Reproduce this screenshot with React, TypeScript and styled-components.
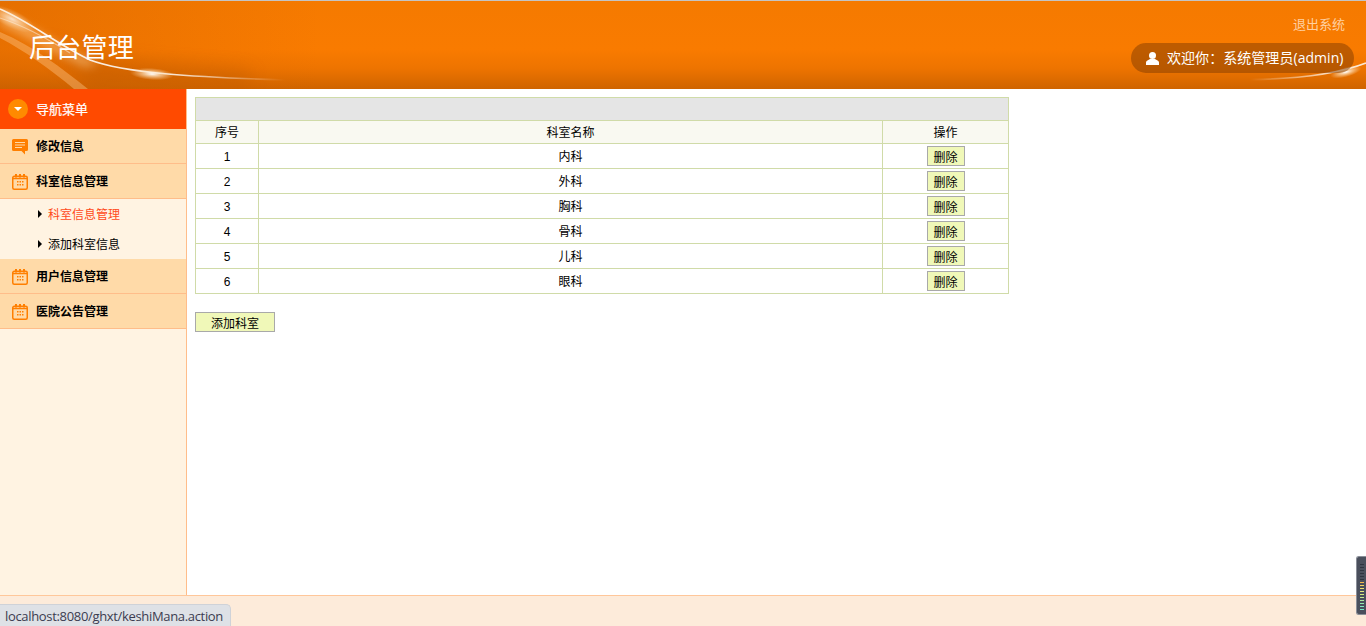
import styled, { createGlobalStyle } from "styled-components";
import { ReactNode } from "react";

const departments = ["内科", "外科", "胸科", "骨科", "儿科", "眼科"];

const widgetColors = ["#2f3440", "#2f3440", "#2f3440", "#2f3440", "#2f3440", "#2f3440", "#f5b850", "#f5d060", "#eee070", "#e6ea80", "#d6ea80", "#c6ea90", "#aee8a0", "#96e8b0", "#86e8c0", "#76e8c8"];

const GlobalStyle = createGlobalStyle`
    html, body {
        margin: 0;
        padding: 0;
        height: 100%;
        overflow: hidden;
        background: #fff;
        font-family: "Liberation Sans", "Noto Sans CJK SC", sans-serif;
        font-size: 12px;
    }
    #root {
        height: 100%;
    }
`;

function HeaderSwoosh() {
    return (
        <SwooshSvg viewBox="0 0 1366 88">
            <defs>
                <radialGradient id="glow">
                    <stop offset="0" stopColor="#fff" stopOpacity="1" />
                    <stop offset="0.45" stopColor="#ffe6c4" stopOpacity="0.6" />
                    <stop offset="1" stopColor="#ffd9a8" stopOpacity="0" />
                </radialGradient>
                <linearGradient id="streak" x1="0" x2="1" y1="0" y2="0">
                    <stop offset="0" stopColor="#fff" stopOpacity="0.9" />
                    <stop offset="0.6" stopColor="#fff" stopOpacity="0.85" />
                    <stop offset="1" stopColor="#fff" stopOpacity="0" />
                </linearGradient>
                <linearGradient id="rightStreak" x1="0" x2="1" y1="0" y2="0">
                    <stop offset="0" stopColor="#fff" stopOpacity="0" />
                    <stop offset="0.8" stopColor="#fff" stopOpacity="0.9" />
                    <stop offset="1" stopColor="#fff" stopOpacity="0.8" />
                </linearGradient>
                <linearGradient id="leftShade" x1="0" x2="1" y1="0" y2="0">
                    <stop offset="0" stopColor="#c85c00" stopOpacity="0.35" />
                    <stop offset="1" stopColor="#c85c00" stopOpacity="0" />
                </linearGradient>
                <filter id="soft" x="-20%" y="-50%" width="140%" height="200%">
                    <feGaussianBlur stdDeviation="5" />
                </filter>
                <filter id="softer" x="-20%" y="-50%" width="140%" height="200%">
                    <feGaussianBlur stdDeviation="0.6" />
                </filter>
                <filter id="shade" x="-30%" y="-80%" width="160%" height="260%">
                    <feGaussianBlur stdDeviation="9" />
                </filter>
            </defs>
            <rect x="0" y="0" width="320" height="88" fill="url(#leftShade)" />
            <path d="M40 40 C90 60 150 62 250 70 L250 84 L90 84 Z" fill="#b85600" opacity="0.4" filter="url(#shade)" />
            <path d="M0 12 C40 28 60 48 100 62 L85 66 C50 50 25 34 0 24 Z" fill="#ffd6a0" opacity="0.5" filter="url(#soft)" />
            <path d="M0 31 C35 46 60 66 88 88 L74 88 C50 68 25 50 0 37 Z" fill="#ffc88a" opacity="0.4" filter="url(#softer)" />
            <path d="M0 8 C32 22 55 42 90 59 C125 72 190 76 285 79" fill="none" stroke="url(#streak)" strokeWidth="1.6" filter="url(#softer)" />
            <path d="M0 17 C25 25 45 36 70 52" fill="none" stroke="#fff" strokeOpacity="0.45" strokeWidth="1.2" filter="url(#softer)" />
            <ellipse cx="12" cy="18" rx="26" ry="9" fill="url(#glow)" opacity="0.75" transform="rotate(26 12 18)" />
            <ellipse cx="152" cy="73" rx="22" ry="6" fill="url(#glow)" transform="rotate(4 152 73)" />
            <path d="M1250 78.5 C1295 78 1335 74 1366 62" fill="none" stroke="url(#rightStreak)" strokeWidth="1.8" filter="url(#softer)" />
            <ellipse cx="1346" cy="71" rx="16" ry="5" fill="url(#glow)" transform="rotate(-15 1346 71)" />
        </SwooshSvg>
    );
}

function CommentIcon() {
    return (
        <MenuIconSvg viewBox="0 0 16 16">
            <path d="M0 1.5 A1.5 1.5 0 0 1 1.5 0 H14.5 A1.5 1.5 0 0 1 16 1.5 V10.5 A1.5 1.5 0 0 1 14.5 12 H13 V15.5 L9.5 12 H1.5 A1.5 1.5 0 0 1 0 10.5 Z" fill="#ff7f00" />
            <path d="M3 3.5 H13 M3 6 H13 M3 8.5 H10" stroke="#ffdaa8" strokeWidth="1" />
        </MenuIconSvg>
    );
}

function CalendarIcon() {
    return (
        <MenuIconSvg viewBox="0 0 16 16">
            <rect x="0.75" y="2.25" width="14.5" height="13" rx="1.5" fill="none" stroke="#ff7f00" strokeWidth="1.5" />
            <rect x="3" y="0" width="2" height="3.5" fill="#ff7f00" />
            <rect x="7" y="0" width="2" height="3.5" fill="#ff7f00" />
            <rect x="11" y="0" width="2" height="3.5" fill="#ff7f00" />
            <path d="M1 4.5 H15" stroke="#ff7f00" strokeWidth="1.5" />
            <path d="M5 7 h1.5 v1.5 h-1.5 z M7.5 7 h1.5 v1.5 h-1.5 z M10 7 h1.5 v1.5 h-1.5 z M5 10 h1.5 v1.5 h-1.5 z M7.5 10 h1.5 v1.5 h-1.5 z M10 10 h1.5 v1.5 h-1.5 z" fill="#ff7f00" />
        </MenuIconSvg>
    );
}

function UserIcon() {
    return (
        <svg width="13" height="13" viewBox="0 0 13 13">
            <circle cx="6.5" cy="3.5" r="3.5" fill="#fff" />
            <path d="M0 13 V10.5 C0 8.5 2.5 8 4 7 H9 C10.5 8 13 8.5 13 10.5 V13 Z" fill="#fff" />
        </svg>
    );
}

function MenuGroup(props: { icon: ReactNode; label: string }) {
    return (
        <GroupRow>
            {props.icon}
            <GroupLabel>{props.label}</GroupLabel>
        </GroupRow>
    );
}

function App() {
    return (
        <>
            <GlobalStyle />
            <Page>
                <Header>
                    <HeaderSwoosh />
                    <Title>后台管理</Title>
                    <HeaderRight>
                        <Logout>退出系统</Logout>
                        <WelcomePill>
                            <UserIcon />
                            <WelcomeText>欢迎你：系统管理员(admin)</WelcomeText>
                        </WelcomePill>
                    </HeaderRight>
                </Header>
                <Body>
                    <Sidebar>
                        <NavTitle>
                            <NavBullet />
                            <NavTitleText>导航菜单</NavTitleText>
                        </NavTitle>
                        <MenuGroup icon={<CommentIcon />} label="修改信息" />
                        <MenuGroup icon={<CalendarIcon />} label="科室信息管理" />
                        <SubMenu>
                            <SubItem $active>科室信息管理</SubItem>
                            <SubItem>添加科室信息</SubItem>
                        </SubMenu>
                        <MenuGroup icon={<CalendarIcon />} label="用户信息管理" />
                        <MenuGroup icon={<CalendarIcon />} label="医院公告管理" />
                    </Sidebar>
                    <Content>
                        <DataTable>
                            <colgroup>
                                <col width="63" />
                                <col width="624" />
                                <col width="126" />
                            </colgroup>
                            <tbody>
                                <CaptionRow>
                                    <td colSpan={3}></td>
                                </CaptionRow>
                                <HeadRow>
                                    <td>序号</td>
                                    <td>科室名称</td>
                                    <td>操作</td>
                                </HeadRow>
                                {departments.map((name, i) => (
                                    <DataRow key={name}>
                                        <td>{i + 1}</td>
                                        <td>{name}</td>
                                        <td>
                                            <DeleteButton>删除</DeleteButton>
                                        </td>
                                    </DataRow>
                                ))}
                            </tbody>
                        </DataTable>
                        <AddButton>添加科室</AddButton>
                    </Content>
                </Body>
                <Footer />
                <StatusTip>localhost:8080/ghxt/keshiMana.action</StatusTip>
                <SideWidget>
                    {widgetColors.map((c, i) => (
                        <WidgetBar key={i} $color={c} />
                    ))}
                </SideWidget>
            </Page>
        </>
    );
}

const Page = styled.div`
    height: 626px;
    display: flex;
    flex-direction: column;
    position: relative;
    overflow: hidden;
`;

const Header = styled.div`
    height: 88px;
    flex: none;
    border-top: 1px solid #c4c4c4;
    position: relative;
    display: flex;
    justify-content: space-between;
    background: linear-gradient(180deg, #f57a00 0%, #f97b00 55%, #ee7400 76%, #cf6400 100%);
`;

const SwooshSvg = styled.svg`
    position: absolute;
    left: 0;
    top: 0;
    width: 100%;
    height: 100%;
`;

const Title = styled.div`
    position: relative;
    margin: 27px 0 0 29px;
    font-size: 26px;
    letter-spacing: 0.25px;
    line-height: 36px;
    color: #fff;
    font-family: "Noto Sans CJK SC", sans-serif;
`;

const HeaderRight = styled.div`
    position: relative;
    display: flex;
    flex-direction: column;
    align-items: flex-end;
    padding-right: 12px;
`;

const Logout = styled.div`
    margin: 13px 9px 0 0;
    font-size: 13px;
    line-height: 20px;
    color: #ffd0a0;
    font-family: "Noto Sans CJK SC", sans-serif;
`;

const WelcomePill = styled.div`
    margin-top: 9px;
    height: 30px;
    width: 223px;
    box-sizing: border-box;
    padding-left: 15px;
    border-radius: 15px;
    background: rgba(130, 60, 0, 0.5);
    display: flex;
    align-items: center;
    gap: 8px;
    color: #fff;
    font-size: 14px;
    font-family: "Open Sans", "Noto Sans CJK SC", sans-serif;
    white-space: nowrap;
`;

const WelcomeText = styled.span`
    margin-bottom: 2px;
    letter-spacing: 0.05px;
`;

const Body = styled.div`
    flex: 1;
    min-height: 0;
    display: flex;
`;

const Sidebar = styled.div`
    width: 186px;
    flex: none;
    background: #fff3e2;
    border-right: 1px solid #ffbd8a;
`;

const NavTitle = styled.div`
    height: 40px;
    background: #ff4a00;
    display: flex;
    align-items: center;
    padding-left: 8px;
    gap: 8px;
    color: #fff;
    font-size: 13px;
    font-family: "Noto Sans CJK SC", sans-serif;
`;

const NavTitleText = styled.span`
    margin-bottom: 2px;
    -webkit-text-stroke: 0.2px #fff;
`;

const NavBullet = styled.div`
    width: 20px;
    height: 20px;
    border-radius: 50%;
    background: #ff8a00;
    position: relative;
    &::after {
        content: "";
        position: absolute;
        left: 6px;
        top: 8px;
        border-style: solid;
        border-width: 4px 4px 0 4px;
        border-color: #fff transparent transparent transparent;
    }
`;

const GroupRow = styled.div`
    height: 34px;
    box-sizing: content-box;
    border-bottom: 1px solid #ffbd8a;
    background: #ffdaa8;
    display: flex;
    align-items: center;
    padding-left: 12px;
    gap: 8px;
    color: #000;
    font-size: 12px;
    font-weight: 700;
    font-family: "Noto Sans CJK SC", sans-serif;
`;

const GroupLabel = styled.span`
    margin-bottom: 1px;
`;

const MenuIconSvg = styled.svg`
    width: 16px;
    height: 16px;
    flex: none;
    margin-top: 2px;
`;

const SubMenu = styled.div`
    height: 60px;
`;

const SubItem = styled.div<{ $active?: boolean }>`
    height: 30px;
    line-height: 30px;
    padding-left: 48px;
    position: relative;
    color: ${(p) => (p.$active ? "#ff4a1a" : "#000")};
    font-family: "Noto Sans CJK SC", sans-serif;
    font-size: 12px;
    &::before {
        content: "";
        position: absolute;
        left: 38px;
        top: 11px;
        border-style: solid;
        border-width: 4px 0 4px 4px;
        border-color: transparent transparent transparent #000;
    }
`;

const Content = styled.div`
    flex: 1;
    padding: 8px;
`;

const DataTable = styled.table`
    width: 813px;
    table-layout: fixed;
    border-collapse: collapse;
    font-family: "Liberation Sans", "Noto Sans CJK SC", sans-serif;
    font-size: 12px;
    color: #000;
    td {
        border: 1px solid #d0dba8;
        text-align: center;
        padding: 0;
    }
`;

const CaptionRow = styled.tr`
    height: 23px;
    background: #e5e5e5;
`;

const HeadRow = styled.tr`
    height: 23px;
    background: #f9f9f1;
    td {
        padding-bottom: 2px;
    }
`;

const DataRow = styled.tr`
    height: 25px;
    td:first-child {
        padding-top: 2px;
    }
    td:nth-child(2) {
        padding-bottom: 1px;
    }
`;

const YellowButton = styled.button`
    display: block;
    box-sizing: border-box;
    padding: 0;
    border: 1px solid #a9a9a9;
    background: #f0f8b8;
    color: #000;
    font-family: "Liberation Sans", "Noto Sans CJK SC", sans-serif;
    font-size: 12px;
`;

const DeleteButton = styled(YellowButton)`
    width: 38px;
    height: 20px;
    margin: 0 auto;
`;

const AddButton = styled(YellowButton)`
    width: 80px;
    height: 20px;
    margin-top: 18px;
`;

const Footer = styled.div`
    height: 30px;
    flex: none;
    background: #fdebda;
    border-top: 1px solid #ffc79a;
`;

const StatusTip = styled.div`
    position: absolute;
    left: 0;
    bottom: 0;
    height: 22px;
    width: 231px;
    box-sizing: border-box;
    padding-left: 5px;
    line-height: 23px;
    font-size: 13px;
    font-family: "Open Sans", sans-serif;
    letter-spacing: -0.33px;
    color: #3c3c50;
    background: #dee1e6;
    border: 1px solid #cfd2d8;
    border-left: none;
    border-bottom: none;
    border-radius: 0 5px 0 0;
    white-space: nowrap;
    overflow: hidden;
`;

const SideWidget = styled.div`
    position: absolute;
    right: 0;
    top: 556px;
    width: 10px;
    height: 59px;
    box-sizing: border-box;
    padding: 7px 2px 0 3px;
    background: #4a4f5c;
    border: 1px solid #8a8e98;
    border-right: none;
    border-radius: 3px 0 0 3px;
    display: flex;
    flex-direction: column;
    gap: 2px;
`;

const WidgetBar = styled.div<{ $color: string }>`
    height: 1px;
    flex: none;
    background: ${(p) => p.$color};
`;

export default App;
